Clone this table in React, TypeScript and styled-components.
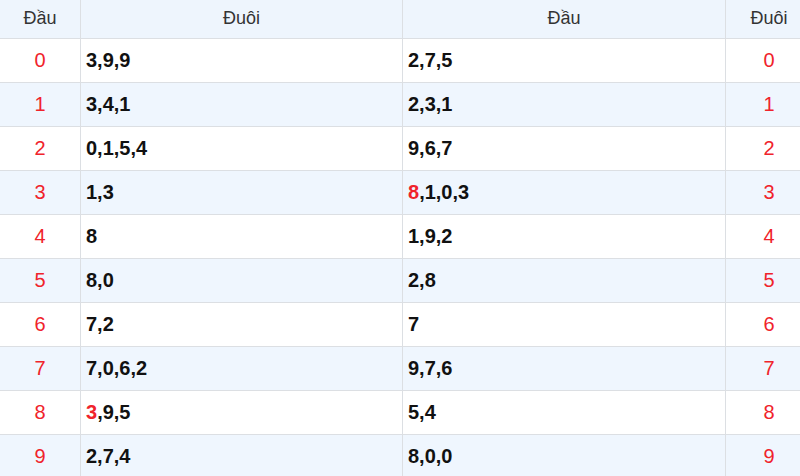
import * as React from "react";
import styled, { createGlobalStyle } from "styled-components";

const GlobalStyle = createGlobalStyle`
  html, body {
    margin: 0;
    padding: 0;
    background: #ffffff;
  }
  body {
    font-family: "Liberation Sans", Arial, sans-serif;
  }
`;

const Table = styled.table`
  width: 800px;
  border-collapse: collapse;
  table-layout: fixed;
  font-family: "Liberation Sans", Arial, sans-serif;
`;

const HeadRow = styled.tr`
  height: 38px;
  background: #eef5fd;
`;

const HeadCell = styled.th<{ $w: number }>`
  width: ${(p) => p.$w}px;
  font-weight: normal;
  font-size: 18px;
  color: #333333;
  text-align: center;
  border: 1px solid #dcdfe3;
  border-top: none;
  padding: 0;
  &:first-child { border-left: none; }
  &:last-child { border-right: none; padding-left: 6px; }
`;

const Row = styled.tr<{ $alt: boolean }>`
  height: 44px;
  background: ${(p) => (p.$alt ? "#eff6fe" : "#ffffff")};
`;

const NumCell = styled.td`
  text-align: center;
  font-size: 20px;
  color: #f0232b;
  border: 1px solid #dcdfe3;
  padding: 0;
  &:first-child { border-left: none; }
  &:last-child { border-right: none; padding-left: 6px; }
`;

const ValueCell = styled.td`
  text-align: left;
  font-size: 20px;
  font-weight: bold;
  color: #111111;
  border: 1px solid #dcdfe3;
  padding: 0 5px;
`;

const Hot = styled.span`
  color: #f0232b;
`;

type Part = { v: string; hot?: boolean };

const rows: { dau: Part[]; duoi: Part[] }[] = [
  { duoi: [{ v: "3,9,9" }], dau: [{ v: "2,7,5" }] },
  { duoi: [{ v: "3,4,1" }], dau: [{ v: "2,3,1" }] },
  { duoi: [{ v: "0,1,5,4" }], dau: [{ v: "9,6,7" }] },
  { duoi: [{ v: "1,3" }], dau: [{ v: "8", hot: true }, { v: ",1,0,3" }] },
  { duoi: [{ v: "8" }], dau: [{ v: "1,9,2" }] },
  { duoi: [{ v: "8,0" }], dau: [{ v: "2,8" }] },
  { duoi: [{ v: "7,2" }], dau: [{ v: "7" }] },
  { duoi: [{ v: "7,0,6,2" }], dau: [{ v: "9,7,6" }] },
  { duoi: [{ v: "3", hot: true }, { v: ",9,5" }], dau: [{ v: "5,4" }] },
  { duoi: [{ v: "2,7,4" }], dau: [{ v: "8,0,0" }] },
];

const Value = ({ parts }: { parts: Part[] }) => (
  <ValueCell>
    {parts.map((p, i) => (p.hot ? <Hot key={i}>{p.v}</Hot> : <span key={i}>{p.v}</span>))}
  </ValueCell>
);

const App = () => {
  return (
    <>
      <GlobalStyle />
      <Table>
        <thead>
          <HeadRow>
            <HeadCell $w={80}>Đầu</HeadCell>
            <HeadCell $w={321}>Đuôi</HeadCell>
            <HeadCell $w={322}>Đầu</HeadCell>
            <HeadCell $w={74}>Đuôi</HeadCell>
          </HeadRow>
        </thead>
        <tbody>
          {rows.map((r, i) => (
            <Row key={i} $alt={i % 2 === 1}>
              <NumCell>{i}</NumCell>
              <Value parts={r.duoi} />
              <Value parts={r.dau} />
              <NumCell>{i}</NumCell>
            </Row>
          ))}
        </tbody>
      </Table>
    </>
  );
};

export default App;
